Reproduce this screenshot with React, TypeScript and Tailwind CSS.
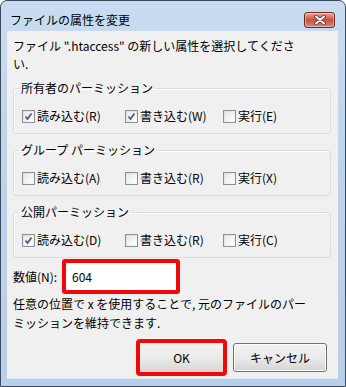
import React from "react";

const font = { fontFamily: '"Noto Sans CJK JP", "Noto Sans", sans-serif' };

function CheckBox({ checked, label, width }: { checked: boolean; label: string; width?: string }) {
  return (
    <div className={`flex items-center gap-[2px] ${width ?? ""}`}>
      <div className="flex h-[13px] w-[13px] items-center justify-center border border-[#8e8f8f] bg-gradient-to-br from-[#dcdcdc] to-[#fbfbfb]">
        <div className="flex h-[9px] w-[9px] items-center justify-center bg-gradient-to-br from-[#e9e9e9] to-[#fdfdfd]">
          {checked && (
            <svg width="9" height="9" viewBox="0 0 9 9">
              <path d="M1.5 4.5 L3.5 7 L7.5 1.5" fill="none" stroke="#4a5f8e" strokeWidth="1.8" />
            </svg>
          )}
        </div>
      </div>
      <span className="leading-[18px]">{label}</span>
    </div>
  );
}

function Group({ title, items }: { title: string; items: [string, boolean][] }) {
  return (
    <fieldset className="rounded-[3px] border border-[#d5dfe5] pt-[10px] pb-[8px] pl-[8px] shadow-[inset_1px_1px_0_#ffffff]">
      <legend className="ml-[-3px] px-[2px] leading-[18px]">{title}</legend>
      <div className="flex">
        <CheckBox label={items[0][0]} checked={items[0][1]} width="w-[103px]" />
        <CheckBox label={items[1][0]} checked={items[1][1]} width="w-[98px]" />
        <CheckBox label={items[2][0]} checked={items[2][1]} />
      </div>
    </fieldset>
  );
}

export default function App() {
  return (
    <div
      className="flex h-[387px] w-[346px] flex-col overflow-hidden rounded-t-[7px] border border-[#3d4a5c] bg-gradient-to-b from-[#c9dcf1] via-[#bcd3ec] to-[#b7cfe9] text-[12px] text-black"
      style={font}
    >
      <div className="flex h-[30px] shrink-0 items-start justify-between pt-[10px] pr-[10px] pl-[9px]">
        <span className="leading-[18px]">ファイルの属性を変更</span>
        <div className="mt-px flex h-[16px] w-[31px] items-center justify-center rounded-[3px] border border-[#6e2d24] bg-gradient-to-b from-[#e7a99c] via-[#c9503f] to-[#d9897a] shadow-[inset_0_0_0_1px_rgba(255,255,255,0.35)]">
          <svg width="12" height="10" viewBox="0 0 12 10">
            <path d="M2 1.5 L10 8.5 M10 1.5 L2 8.5" stroke="#5a1f18" strokeWidth="3.6" strokeLinecap="round" />
            <path d="M2 1.5 L10 8.5 M10 1.5 L2 8.5" stroke="#ffffff" strokeWidth="2" strokeLinecap="round" />
          </svg>
        </div>
      </div>
      <div className="flex flex-1 flex-col pr-[7px] pb-[7px] pl-[6px]">
        <div className="flex flex-1 flex-col border-b border-[#e3ecf6] bg-[#f0f0f0] pt-[6px] pr-[7px] pl-[6px]">
          <p className="leading-[18px]">
            ファイル ".htaccess" の新しい属性を選択してくださ
            <br />
            い.
          </p>
          <div className="mt-[6px] flex flex-col gap-[7px]">
            <Group
              title="所有者のパーミッション"
              items={[
                ["読み込む(R)", true],
                ["書き込む(W)", true],
                ["実行(E)", false],
              ]}
            />
            <Group
              title="グループ パーミッション"
              items={[
                ["読み込む(A)", false],
                ["書き込む(R)", false],
                ["実行(X)", false],
              ]}
            />
            <Group
              title="公開パーミッション"
              items={[
                ["読み込む(D)", true],
                ["書き込む(R)", false],
                ["実行(C)", false],
              ]}
            />
          </div>
          <div className="mt-px flex items-center">
            <span className="w-[49px] leading-[18px]">数値(N):</span>
            <div className="flex h-[35px] w-[118px] items-center rounded-[3px] border-4 border-[#ee0a0a] bg-white pl-[6px]">
              604
            </div>
          </div>
          <p className="leading-[19px]">
            任意の位置で x を使用することで, 元のファイルのパー
            <br />
            ミッションを維持できます.
          </p>
          <div className="mt-[7px] flex items-center justify-end gap-[6px] pr-[4px]">
            <div className="flex h-[37px] w-[91px] items-center justify-center rounded-[4px] border-4 border-[#ee0a0a] bg-gradient-to-b from-[#f2f2f2] via-[#ebebeb] to-[#d6d6d6]">
              OK
            </div>
            <div className="flex h-[29px] w-[94px] items-center justify-center rounded-[3px] border border-[#707070] bg-gradient-to-b from-[#f2f2f2] via-[#ebebeb] to-[#d4d4d4] shadow-[inset_0_0_0_1px_#fcfcfc]">
              キャンセル
            </div>
          </div>
        </div>
      </div>
    </div>
  );
}
